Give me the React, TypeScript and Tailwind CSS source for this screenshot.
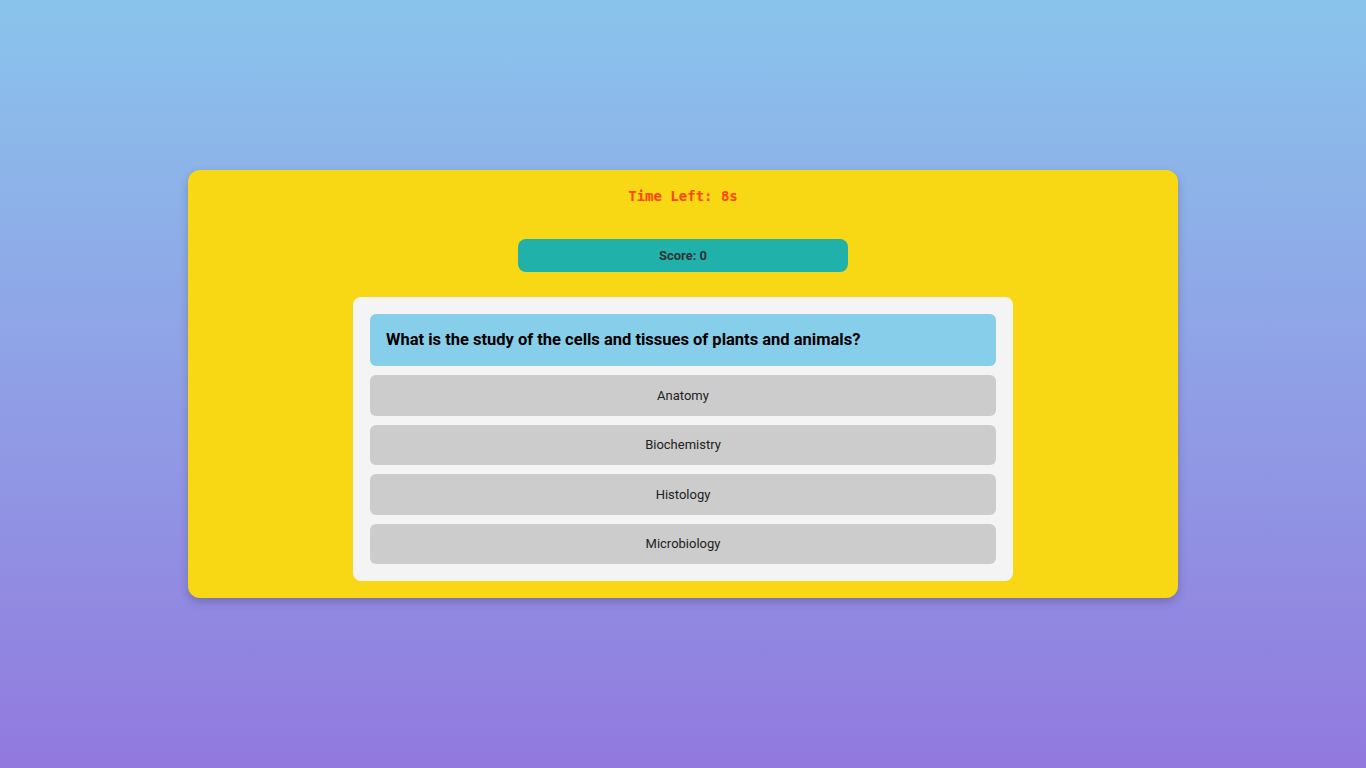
import React from "react";

export default function App() {
  const options = ["Anatomy", "Biochemistry", "Histology", "Microbiology"];
  return (
    <div
      className="min-h-screen w-full flex items-center justify-center bg-gradient-to-b from-[#89c4ec] to-[#9179de]"
      style={{ fontFamily: "Roboto, 'Liberation Sans', sans-serif" }}
    >
      <div className="w-[990px] h-[428px] bg-[#f8d715] rounded-[12px] shadow-[0_4px_10px_rgba(0,0,0,0.2)] flex flex-col items-center pt-[16px] pb-[17px]">
        <div
          className="text-[14px] leading-[20px] text-[#ff4500] font-bold"
          style={{ fontFamily: "'DejaVu Sans Mono', monospace" }}
        >
          Time Left: 8s
        </div>
        <div className="mt-[33px] w-[330px] h-[33px] rounded-[8px] bg-[#20b2aa] flex items-center justify-center text-[13px] font-bold text-[#333]">
          Score: 0
        </div>
        <div className="mt-[25px] w-[660px] h-[284px] bg-[#f4f4f4] rounded-[8px] p-[17px] pt-[17px] flex flex-col gap-[9px]">
          <div className="h-[52px] bg-[#87ceeb] rounded-[6px] px-[16px] flex items-center text-[16.5px] font-bold text-black">
            What is the study of the cells and tissues of plants and animals?
          </div>
          {options.map((o) => (
            <div
              key={o}
              className="h-[40.5px] bg-[#cccccc] rounded-[6px] flex items-center justify-center text-[13px] text-[#222]"
            >
              {o}
            </div>
          ))}
        </div>
      </div>
    </div>
  );
}
